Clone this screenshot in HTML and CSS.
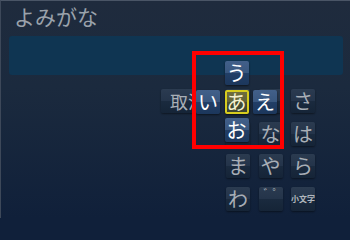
FILE: index.html
```html
<!DOCTYPE html>
<html lang="ja">
<head>
<meta charset="utf-8">
<title>よみがな</title>
<link rel="stylesheet" href="styles.css">
</head>
<body>
<div class="screen">
  <div class="title">よみがな</div>
  <div class="input"></div>
  <div class="keyboard">
    <div class="key cancel"><span class="cancel-text">取消</span></div>
    <div class="key c3 hidden"></div>
    <div class="key hidden"></div>
    <div class="key">さ</div>
    <div class="key c3 hidden"></div>
    <div class="key">な</div>
    <div class="key">は</div>
    <div class="key c3">ま</div>
    <div class="key">や</div>
    <div class="key">ら</div>
    <div class="key c3">わ</div>
    <div class="key dakuten">゛゜</div>
    <div class="key small">小文字</div>
  </div>
  <div class="flick">
    <div class="fkey up">う</div>
    <div class="fkey left">い</div>
    <div class="fkey center">あ</div>
    <div class="fkey right">え</div>
    <div class="fkey down">お</div>
  </div>
  <div class="highlight"></div>
</div>
</body>
</html>
```

FILE: styles.css
```css
html, body {
  margin: 0;
  padding: 0;
  background: #10203a;
}
.screen {
  position: relative;
  width: 350px;
  height: 218px;
  box-sizing: border-box;
  border-top: 1px solid #4a5566;
  border-left: 1px solid #3d4859;
  background: linear-gradient(180deg, #1f2b3d 0%, #1b2a3e 40%, #10203a 100%);
  font-family: "Noto Sans CJK JP", "Noto Sans", sans-serif;
  overflow: hidden;
}
.title {
  margin: 5px 0 0 13px;
  font-size: 21px;
  line-height: 21px;
  color: #9aa2ab;
}
.input {
  margin: 9px 7px 0 8px;
  height: 39px;
  border-radius: 3px;
  background: #0f3552;
}
.keyboard {
  margin: 14px 0 0 160px;
  display: grid;
  grid-template-columns: repeat(5, 24px);
  grid-auto-rows: 24px;
  column-gap: 8.5px;
  row-gap: 8.5px;
}
.key {
  display: flex;
  align-items: center;
  justify-content: center;
  border-radius: 2px;
  background: linear-gradient(180deg, #2b3b50 0%, #24344a 48%, #1a2a3e 52%, #152437 100%);
  box-shadow: 0 1px 2px rgba(0, 0, 0, 0.45);
  color: #a8aeb6;
  font-size: 20px;
  line-height: 1;
}
.key.cancel {
  grid-column: 1 / span 2;
  width: 34px;
  overflow: hidden;
  justify-content: flex-start;
  padding-left: 9px;
  box-sizing: border-box;
  white-space: nowrap;
}
.cancel-text {
  font-size: 18px;
}
.key.c3 {
  grid-column: 3;
}
.key.dakuten {
  align-items: flex-start;
  font-size: 11px;
  padding: 1px 0 0 4px;
  box-sizing: border-box;
  letter-spacing: -2px;
}
.key.small {
  font-size: 8px;
  font-weight: bold;
  color: #b0b6bd;
}
.flick {
  position: absolute;
  left: 195px;
  top: 60px;
  display: grid;
  grid-template-columns: repeat(3, 24px);
  grid-template-rows: repeat(3, 24px);
  column-gap: 4.5px;
  row-gap: 4.5px;
}
.fkey {
  display: flex;
  align-items: center;
  justify-content: center;
  border-radius: 2px;
  background: linear-gradient(180deg, #42608a 0%, #39577f 48%, #213e66 52%, #1c375c 100%);
  box-shadow: 0 1px 2px rgba(0, 0, 0, 0.5);
  color: #ffffff;
  font-size: 20px;
  line-height: 1;
}
.fkey.up { grid-column: 2; grid-row: 1; }
.fkey.left { grid-column: 1; grid-row: 2; }
.fkey.center {
  grid-column: 2;
  grid-row: 2;
  box-sizing: border-box;
  border: 2px solid #d6cc1e;
  background: linear-gradient(180deg, #6e6d3c 0%, #62633a 48%, #474d34 52%, #3b4331 100%);
  color: #f4f0d0;
}
.fkey.right { grid-column: 3; grid-row: 2; }
.fkey.down { grid-column: 2; grid-row: 3; }
.highlight {
  position: absolute;
  left: 191px;
  top: 50px;
  width: 92px;
  height: 98px;
  box-sizing: border-box;
  border: 4px solid #ff0000;
}
```
